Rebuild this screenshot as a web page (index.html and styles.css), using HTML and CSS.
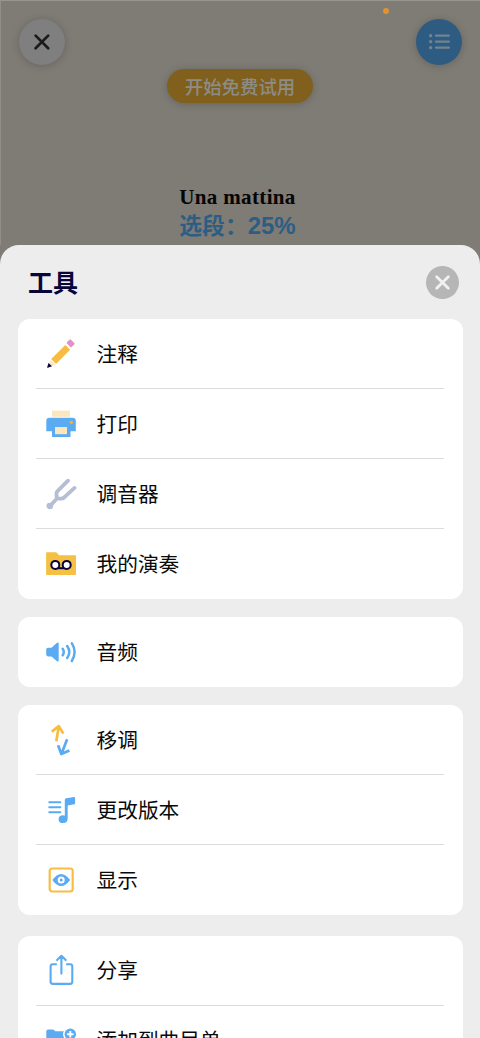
FILE: index.html
```html
<!DOCTYPE html>
<html lang="zh-CN">
<head>
<meta charset="utf-8">
<title>工具</title>
<link rel="stylesheet" href="styles.css">
</head>
<body>
<div class="screen">
  <header class="score">
    <span class="mic-dot"></span>
    <div class="topbar">
      <button class="round round-close" aria-label="关闭"><svg width="46" height="46" viewBox="0 0 46 46"><path d="M16.600 16.600 29.200 29.200M29.200 16.600 16.600 29.200" stroke="#1b1b1b" stroke-width="2.700" stroke-linecap="round"/></svg></button>
      <button class="round round-menu" aria-label="菜单"><svg width="46" height="46" viewBox="0 0 46 46" stroke="#718490" stroke-width="2.300" stroke-linecap="round"><path d="M20 16.700H32.800M20 22.700H32.800M20 28.700H32.800"/><path d="M14.600 16.700h.1M14.600 22.700h.1M14.600 28.700h.1" stroke-width="3.300"/></svg></button>
    </div>
    <button class="trial">开始免费试用</button>
    <div class="piece">Una mattina</div>
    <div class="excerpt"><span>选段：</span><span class="percent">25%</span></div>
  </header>
  <main class="sheet">
    <div class="sheet-head">
      <h1 class="title">工具</h1>
      <button class="dismiss" aria-label="关闭"><svg width="33" height="33" viewBox="0 0 33 33"><path d="m10.700 10.700 11.600 11.600m0-11.600L10.700 22.300" stroke="#f1f1f1" stroke-width="2.800" stroke-linecap="round"/></svg></button>
    </div>
    <section class="card">
      <div class="row"><svg class="icon" viewBox="0 0 32 32"><path d="M5.800 22.200 10.200 26.600 6 28.400 3.700 26z" fill="#fbe7bf"/><path d="m3.500 25-1.300 4.200q-.1.700.6.500l4.200-1.400z" fill="#08053b"/><path d="m20.300 7 4.800 4.800L11 25.900l-4.800-4.800z" fill="#f6bd42"/><path d="m23 3.100 1.500-1.400a1 1 0 0 1 1.400 0l3.400 3.400a1 1 0 0 1 0 1.300l-2.600 2.700a1 1 0 0 1-1.300 0l-3.500-3.600a.8.800 0 0 1 0-1.100z" fill="#e58fc6"/></svg><span class="label">注释</span></div>
      <div class="row"><svg class="icon" viewBox="0 0 32 32"><path d="M7 2.700h18v6H7z" fill="#fbe6bd"/><path d="M4.500 9.800h23q3.300 0 3.300 3v10.500h-5.300V29H7v-5.700H1.300V12.800q0-3 3.200-3z" fill="#5aabf2"/><path d="M10 19h12v7.200H10z" fill="#fbe6bd"/><circle cx="26.400" cy="14.300" r="1.600" fill="#f0b830"/></svg><span class="label">打印</span></div>
      <div class="row"><svg class="icon" viewBox="0 0 32 32" fill="none" stroke="#b5bed4" stroke-width="3.800" stroke-linecap="round" stroke-linejoin="round"><path d="M23 2.700 12.500 13.200q-1.200 1.200-1 3l.2 4.300 4.300.2q2 0 3.200-1.300l10.300-9.500M11.700 20.700l-6.700 7.300"/><circle cx="4.800" cy="28" r="1.900" fill="#b5bed4" stroke-width="2.800"/></svg><span class="label">调音器</span></div>
      <div class="row"><svg class="icon" viewBox="0 0 32 32"><path d="M1.800 4.300h8.500q1.400 0 2 1l1.800 2h16.200q.7 0 .7.700v18.200q0 .7-.7.700H1.800q-.7 0-.7-.7V5q0-.7.700-.7z" fill="#f5c043"/><path d="M10 20.200h12" stroke="#08053b" stroke-width="2"/><g fill="#fff" stroke="#08053b" stroke-width="2"><circle cx="10.300" cy="16.900" r="4"/><circle cx="21.700" cy="16.900" r="4"/></g></svg><span class="label">我的演奏</span></div>
    </section>
    <section class="card">
      <div class="row"><svg class="icon" viewBox="0 0 32 32"><path d="M3 11.700h3.500l5.200-4.600q2-1.500 2 .7v16.400q0 2-2 .7l-5.200-4.500H3q-1.800 0-1.800-1.800v-5.100q0-1.800 1.800-1.800z" fill="#5aabf2"/><path d="M17.700 12.800q2.100 3.200 0 6.500M22.200 10q4.200 6 0 12M26.800 7.200q5.600 8.900 0 17.800" fill="none" stroke="#5aabf2" stroke-width="2.500" stroke-linecap="round"/></svg><span class="label">音频</span></div>
    </section>
    <section class="card">
      <div class="row"><svg class="icon" viewBox="0 0 32 32" fill="none" stroke-width="2.700" stroke-linejoin="round"><path d="m11.300 17.300 2.500-15M6.800 7.600l7-5.500 4.500 7.500" stroke="#f7bd42"/><path d="m22.100 15.300-5.400 14.200M13.100 21.200l3.200 8.800 8.100-3.400" stroke="#5aabf2"/></svg><span class="label">移调</span></div>
      <div class="row"><svg class="icon" viewBox="0 0 32 32"><path d="M4.300 8.200h11M4.300 13.200h11M4.300 18.200h11" stroke="#5aabf2" stroke-width="2.100" stroke-linecap="round"/><path d="M19.800 5.900q0-1.500 1.500-1.700l7.800-1.300q1-.1 1 1v5.400q0 .8-.8 1l-6.600 1.200v12.700q0 4.900-4.700 4.900-4.400 0-4.400-3.900 0-3.700 4.400-3.900 1 0 1.800.4z" fill="#5aabf2"/></svg><span class="label">更改版本</span></div>
      <div class="row"><svg class="icon" viewBox="0 0 32 32"><rect x="4.700" y="4.500" width="23" height="23" rx="2.500" fill="#fff" stroke="#f8bd42" stroke-width="2.200"/><path d="M7.300 16q8.900-12 17.800 0-8.900 12-17.800 0z" fill="#5aabf2"/><circle cx="16.200" cy="16" r="2.500" fill="#5aabf2" stroke="#fff" stroke-width="2"/></svg><span class="label">显示</span></div>
    </section>
    <section class="card card-last">
      <div class="row"><svg class="icon" viewBox="0 0 32 32" fill="none" stroke="#5aabf2" stroke-width="2.100" stroke-linecap="round" stroke-linejoin="round"><path d="M11 10.300H7.800q-2.200 0-2.200 2.300v15q0 2.300 2.200 2.300h17.300q2.200 0 2.200-2.300v-15q0-2.300-2.200-2.300H22M16.400 19.600V1.800M12.100 6.100l4.300-4.300 4.300 4.300"/></svg><span class="label">分享</span></div>
      <div class="row"><svg class="icon" viewBox="0 0 32 32"><path d="M3 5.500h4.700q1.600 0 2.500 1.700h18.300v20H1.300v-20q0-1.700 1.700-1.700z" fill="#5aabf2"/><circle cx="25.300" cy="10.300" r="7.200" fill="#fff"/><circle cx="25.300" cy="10.300" r="5.700" fill="#5aabf2"/><path d="M25.300 7v6.600M22 10.300h6.600" stroke="#fff" stroke-width="1.900"/></svg><span class="label">添加到曲目单</span></div>
    </section>
  </main>
</div>
</body>
</html>
```
FILE: styles.css
```css
* { box-sizing: border-box; }
body { margin: 0; font-family: "Liberation Sans", "Noto Sans CJK SC", sans-serif; }
button { border: 0; padding: 0; font: inherit; }
svg { display: block; flex: none; }
.screen { width: 480px; height: 1038px; overflow: hidden; background: #7f7b75; display: flex; flex-direction: column; }
.score { height: 245px; flex: none; position: relative; display: flex; flex-direction: column; align-items: center; padding-right: 1px; border-top: 1px solid #989590; border-left: 1px solid #928f89; }
.mic-dot { position: absolute; left: 382px; top: 7px; width: 6px; height: 6px; border-radius: 50%; background: #df942f; }
.topbar { align-self: stretch; display: flex; justify-content: space-between; padding: 18px 17px 0 18px; height: 68px; }
.round { width: 46px; height: 46px; border-radius: 50%; box-shadow: 0 1px 9px rgba(0, 0, 0, .2); }
.round-close { background: #7f7f80; }
.round-menu { background: #2e5b81; }
.trial { width: 146px; height: 34px; border-radius: 17px; background: #80601c; color: #8d8c87; font-family: "Noto Sans CJK SC", sans-serif; font-size: 18.400px; font-weight: 500; line-height: 33px; box-shadow: 0 1px 9px rgba(0, 0, 0, .2); }
.piece { margin: 80px 5px 0 0; height: 28px; line-height: 28px; font-family: "Palatino Linotype", Palatino, "Liberation Serif", serif; font-weight: 700; font-size: 21px; letter-spacing: .35px; color: #050505; white-space: nowrap; }
.excerpt { margin-right: 5px; height: 28px; line-height: 29px; font-size: 22.800px; font-weight: 700; color: #2c5e84; white-space: nowrap; }
.percent { font-size: 24px; }
.sheet { flex: 1; min-height: 0; background: #ededed; border-radius: 19px 19px 0 0; padding: 0 17.500px; display: flex; flex-direction: column; }
.sheet-head { height: 74px; flex: none; display: flex; align-items: center; justify-content: space-between; padding: 0 3.500px 0 10.500px; }
.title { margin: 0; padding-bottom: 3px; font-family: "Noto Sans CJK SC", sans-serif; font-size: 25px; line-height: 36px; font-weight: 700; color: #08053b; }
.dismiss { width: 33px; height: 33px; border-radius: 50%; background: #b6b6b7; }
.card { flex: none; margin-bottom: 18.500px; padding: 0 18.500px; background: #fff; border-radius: 12px; }
.card-last { margin-top: 2.500px; }
.row { height: 70px; display: flex; align-items: center; gap: 19.500px; padding-left: 9px; border-bottom: 1px solid #dcdcdc; }
.row:last-child { height: 69.500px; border-bottom: 0; }
.icon { width: 32px; height: 32px; }
.label { padding-bottom: 2px; font-family: "Noto Sans CJK SC", sans-serif; font-size: 20.700px; line-height: 30px; color: #090909; white-space: nowrap; }
```
